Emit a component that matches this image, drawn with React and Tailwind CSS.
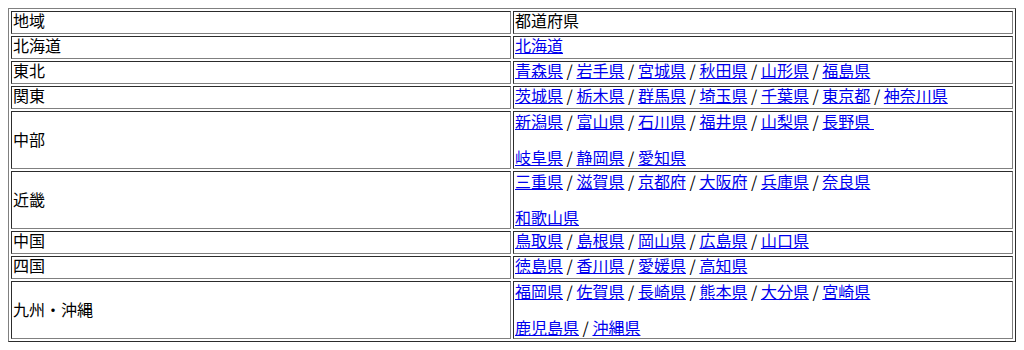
import React from "react";

const rows = [
  ["北海道", [["北海道"]]],
  ["東北", [["青森県", "岩手県", "宮城県", "秋田県", "山形県", "福島県"]]],
  ["関東", [["茨城県", "栃木県", "群馬県", "埼玉県", "千葉県", "東京都", "神奈川県"]]],
  ["中部", [["新潟県", "富山県", "石川県", "福井県", "山梨県", "長野県\u00a0"], ["岐阜県", "静岡県", "愛知県"]]],
  ["近畿", [["三重県", "滋賀県", "京都府", "大阪府", "兵庫県", "奈良県"], ["和歌山県"]]],
  ["中国", [["鳥取県", "島根県", "岡山県", "広島県", "山口県"]]],
  ["四国", [["徳島県", "香川県", "愛媛県", "高知県"]]],
  ["九州・沖縄", [["福岡県", "佐賀県", "長崎県", "熊本県", "大分県", "宮崎県"], ["鹿児島県", "沖縄県"]]],
];

const cellBase =
  "border border-t-[#2c2c2c] border-l-[#2c2c2c] border-r-[#808080] border-b-[#808080] px-px pt-0 text-left align-middle";

function Line({ items }) {
  return (
    <>
      {items.map((p, i) => (
        <React.Fragment key={i}>
          {i > 0 && " / "}
          <a href="#" className="text-[#0000ee] underline">
            {p}
          </a>
        </React.Fragment>
      ))}
    </>
  );
}

export default function App() {
  return (
    <div className="bg-white min-h-[350px] pt-2">
      <table className="mx-2 w-[1008px] table-fixed border-separate border-spacing-[2px] border border-t-[#808080] border-l-[#808080] border-r-[#2c2c2c] border-b-[#2c2c2c] font-['Noto_Sans_CJK_JP','Noto_Sans_CJK_SC',sans-serif] text-[16px] text-black">
        <tbody>
          <tr>
            <td className={`${cellBase} pb-[4px] leading-[17px]`}>地域</td>
            <td className={`${cellBase} pb-[4px] leading-[17px]`}>都道府県</td>
          </tr>
          {rows.map(([region, lines]) => {
            const dbl = lines.length > 1;
            const cls = dbl
              ? `${cellBase} pb-[2px] leading-[18px]`
              : `${cellBase} pb-[4px] leading-[17px]`;
            return (
              <tr key={region}>
                <td className={cls}>{region}</td>
                <td className={cls}>
                  {lines.map((l, i) => (
                    <React.Fragment key={i}>
                      {i > 0 && (
                        <>
                          <br />
                          <br />
                        </>
                      )}
                      <Line items={l} />
                    </React.Fragment>
                  ))}
                </td>
              </tr>
            );
          })}
        </tbody>
      </table>
    </div>
  );
}
